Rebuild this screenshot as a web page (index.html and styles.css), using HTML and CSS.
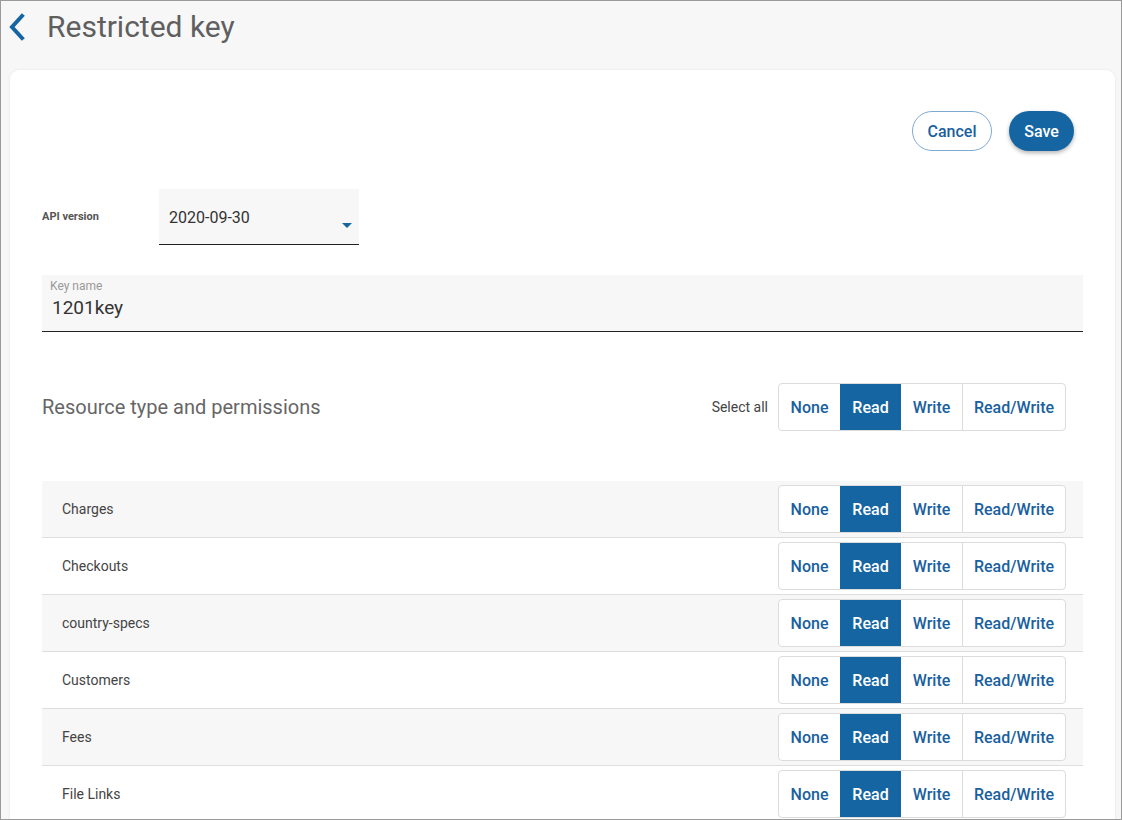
FILE: index.html
```html
<!DOCTYPE html>
<html>
<head>
<meta charset="utf-8">
<link rel="stylesheet" href="styles.css">
</head>
<body>
<div class="frame">
  <header class="header">
    <svg class="back" width="20" height="28" viewBox="0 0 20 28"><path d="M15 3 L5 14 L15 25" fill="none" stroke="#1565a2" stroke-width="4" stroke-linecap="square" stroke-linejoin="miter"/></svg>
    <h1 class="title">Restricted key</h1>
  </header>
  <main class="card">
    <div class="actions">
      <button class="btn btn-outline">Cancel</button>
      <button class="btn btn-primary">Save</button>
    </div>
    <div class="api-row">
      <span class="api-label">API version</span>
      <div class="select">
        <span class="select-value">2020-09-30</span>
        <svg class="caret" width="10" height="5" viewBox="0 0 10 5"><path d="M0 0 H10 L5 5 Z" fill="#1565a2"/></svg>
      </div>
    </div>
    <div class="field">
      <span class="field-label">Key name</span>
      <span class="field-value">1201key</span>
    </div>
    <div class="perm-head">
      <h2 class="perm-title">Resource type and permissions</h2>
      <div class="perm-all">
        <span class="select-all">Select all</span>
        <div class="seg">
          <span class="seg-btn w-none">None</span>
          <span class="seg-btn w-read active">Read</span>
          <span class="seg-btn w-write">Write</span>
          <span class="seg-btn w-rw">Read/Write</span>
        </div>
      </div>
    </div>
    <div class="rows">
      <div class="row"><span class="row-label">Charges</span>
        <div class="seg"><span class="seg-btn w-none">None</span><span class="seg-btn w-read active">Read</span><span class="seg-btn w-write">Write</span><span class="seg-btn w-rw">Read/Write</span></div></div>
      <div class="row"><span class="row-label">Checkouts</span>
        <div class="seg"><span class="seg-btn w-none">None</span><span class="seg-btn w-read active">Read</span><span class="seg-btn w-write">Write</span><span class="seg-btn w-rw">Read/Write</span></div></div>
      <div class="row"><span class="row-label">country-specs</span>
        <div class="seg"><span class="seg-btn w-none">None</span><span class="seg-btn w-read active">Read</span><span class="seg-btn w-write">Write</span><span class="seg-btn w-rw">Read/Write</span></div></div>
      <div class="row"><span class="row-label">Customers</span>
        <div class="seg"><span class="seg-btn w-none">None</span><span class="seg-btn w-read active">Read</span><span class="seg-btn w-write">Write</span><span class="seg-btn w-rw">Read/Write</span></div></div>
      <div class="row"><span class="row-label">Fees</span>
        <div class="seg"><span class="seg-btn w-none">None</span><span class="seg-btn w-read active">Read</span><span class="seg-btn w-write">Write</span><span class="seg-btn w-rw">Read/Write</span></div></div>
      <div class="row"><span class="row-label">File Links</span>
        <div class="seg"><span class="seg-btn w-none">None</span><span class="seg-btn w-read active">Read</span><span class="seg-btn w-write">Write</span><span class="seg-btn w-rw">Read/Write</span></div></div>
    </div>
  </main>
</div>
</body>
</html>
```
FILE: styles.css
```css
* { box-sizing: border-box; }
html, body { margin: 0; padding: 0; }
body { font-family: Roboto, "Liberation Sans", Arial, sans-serif; }
.frame {
  width: 1122px;
  height: 820px;
  border: 1px solid #9a9a9a;
  background: #f7f7f7;
  overflow: hidden;
}
.header {
  height: 69px;
  display: flex;
  align-items: flex-start;
  padding: 10px 0 0 6px;
}
.back { margin-top: 2px; }
.title {
  margin: 0 0 0 20px;
  font-size: 30px;
  font-weight: 400;
  color: #5f5f5f;
  line-height: 32px;
}
.card {
  margin-left: 9px;
  width: 1105px;
  background: #fff;
  border-radius: 9px;
  box-shadow: 0 0 3px rgba(0,0,0,0.08);
  padding: 41px 32px 0 32px;
  min-height: 800px;
}
.actions {
  display: flex;
  justify-content: flex-end;
  gap: 17px;
  padding-right: 9px;
}
.btn {
  height: 40px;
  border-radius: 20px;
  font-family: Roboto, "Liberation Sans", Arial, sans-serif;
  font-size: 16px;
  font-weight: 500;
  padding: 0;
  cursor: pointer;
}
.btn-outline {
  width: 80px;
  background: #fff;
  border: 1px solid #7eaad2;
  color: #1a5f9e;
}
.btn-primary {
  width: 65px;
  background: #1565a2;
  border: none;
  color: #fff;
  box-shadow: 0 2px 4px rgba(0,0,0,0.3);
}
.api-row {
  display: flex;
  align-items: center;
  margin-top: 38px;
}
.api-label {
  width: 117px;
  font-size: 11px;
  font-weight: 700;
  color: #555;
  margin-top: -2px;
}
.select {
  width: 200px;
  height: 56px;
  background: #f7f7f7;
  border-bottom: 1px solid #222;
  position: relative;
  padding: 19px 0 0 10px;
}
.select-value { font-size: 16px; color: #333; }
.caret { position: absolute; left: 183px; top: 34px; }
.field {
  margin-top: 30px;
  height: 57px;
  background: #f7f7f7;
  border-bottom: 1px solid #222;
  display: flex;
  flex-direction: column;
  padding: 4px 0 0 8px;
}
.field-label { font-size: 12px; color: #999; line-height: 14px; }
.field-value { font-size: 19px; color: #333; margin-left: 2px; margin-top: 4px; line-height: 22px; }
.perm-head {
  margin-top: 51px;
  display: flex;
  align-items: center;
  justify-content: space-between;
  padding-right: 17px;
}
.perm-title {
  margin: 0;
  font-size: 20px;
  font-weight: 400;
  color: #666;
}
.perm-all { display: flex; align-items: center; gap: 10px; }
.select-all { font-size: 14px; color: #444; }
.seg {
  display: flex;
  height: 48px;
  border: 1px solid #dcdcdc;
  border-radius: 4px;
  overflow: hidden;
  background: #fff;
}
.seg-btn {
  display: flex;
  align-items: center;
  justify-content: center;
  font-size: 16px;
  font-weight: 500;
  color: #1a5f9e;
  border-left: 1px solid #dcdcdc;
}
.seg-btn:first-child { border-left: none; }
.seg-btn.active { background: #1565a2; color: #fff; border-left: none; }
.seg-btn.active + .seg-btn { border-left: none; }
.w-none { width: 61px; }
.w-read { width: 61px; }
.w-write { width: 61px; }
.w-rw { width: 103px; }
.rows { margin-top: 50px; }
.row {
  height: 57px;
  display: flex;
  align-items: center;
  justify-content: space-between;
  padding: 0 17px 0 20px;
  border-bottom: 1px solid #dedede;
}
.row:nth-child(odd) { background: #f7f7f7; }
.row-label { font-size: 14px; color: #444; }
```
